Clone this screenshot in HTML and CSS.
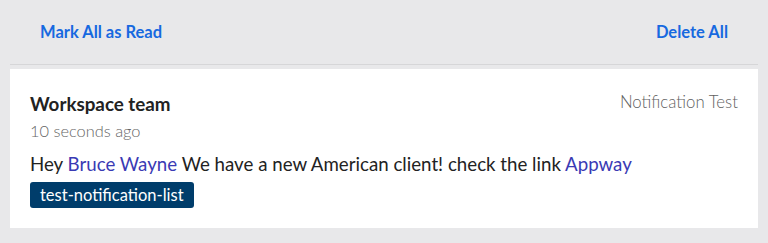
FILE: index.html
```html
<!DOCTYPE html>
<html>
<head>
<meta charset="utf-8">
<link rel="stylesheet" href="styles.css">
</head>
<body>
<div class="panel">
  <div class="toolbar">
    <a class="action" href="#">Mark All as Read</a>
    <a class="action" href="#">Delete All</a>
  </div>
  <div class="card">
    <div class="card-head">
      <div class="sender">Workspace team</div>
      <div class="category">Notification Test</div>
    </div>
    <div class="time">10 seconds ago</div>
    <div class="message">Hey <a class="mention" href="#">Bruce Wayne</a> We have a new American client! check the link <a class="mention" href="#">Appway</a></div>
    <div class="tags"><span class="tag">test-notification-list</span></div>
  </div>
</div>
</body>
</html>
```
FILE: styles.css
```css
html, body {
  margin: 0;
  padding: 0;
  background: #e8e8ea;
  font-family: Lato, "Open Sans", "Liberation Sans", sans-serif;
  color: #222;
}
.panel {
  padding: 0 10px;
}
.toolbar {
  display: flex;
  justify-content: space-between;
  align-items: center;
  height: 65px;
  padding: 0 30px;
  border-bottom: 1px solid #d6d6d8;
  box-sizing: border-box;
}
.action {
  color: #1769e0;
  font-weight: 700;
  font-size: 16.5px;
  text-decoration: none;
}
.card {
  margin-top: 4px;
  background: #fff;
  padding: 23px 20px 20px;
}
.card-head {
  display: flex;
  justify-content: space-between;
  align-items: flex-start;
}
.sender {
  font-size: 18.8px;
  line-height: 24px;
  font-weight: 700;
  color: #222;
}
.category {
  font-size: 16.8px;
  line-height: 20px;
  font-weight: 300;
  color: #5f5f5f;
}
.time {
  margin-top: 4px;
  font-size: 16.4px;
  line-height: 22px;
  font-weight: 300;
  color: #666;
}
.message {
  margin-top: 9px;
  font-size: 18.7px;
  line-height: 26px;
  color: #222;
}
.mention {
  color: #3a3ab4;
  text-decoration: none;
}
.tags {
  margin-top: 5px;
  display: flex;
}
.tag {
  display: block;
  height: 26px;
  background: #003d6b;
  color: #fff;
  font-size: 16.5px;
  line-height: 26px;
  padding: 0 10px;
  border-radius: 3px;
}
```
